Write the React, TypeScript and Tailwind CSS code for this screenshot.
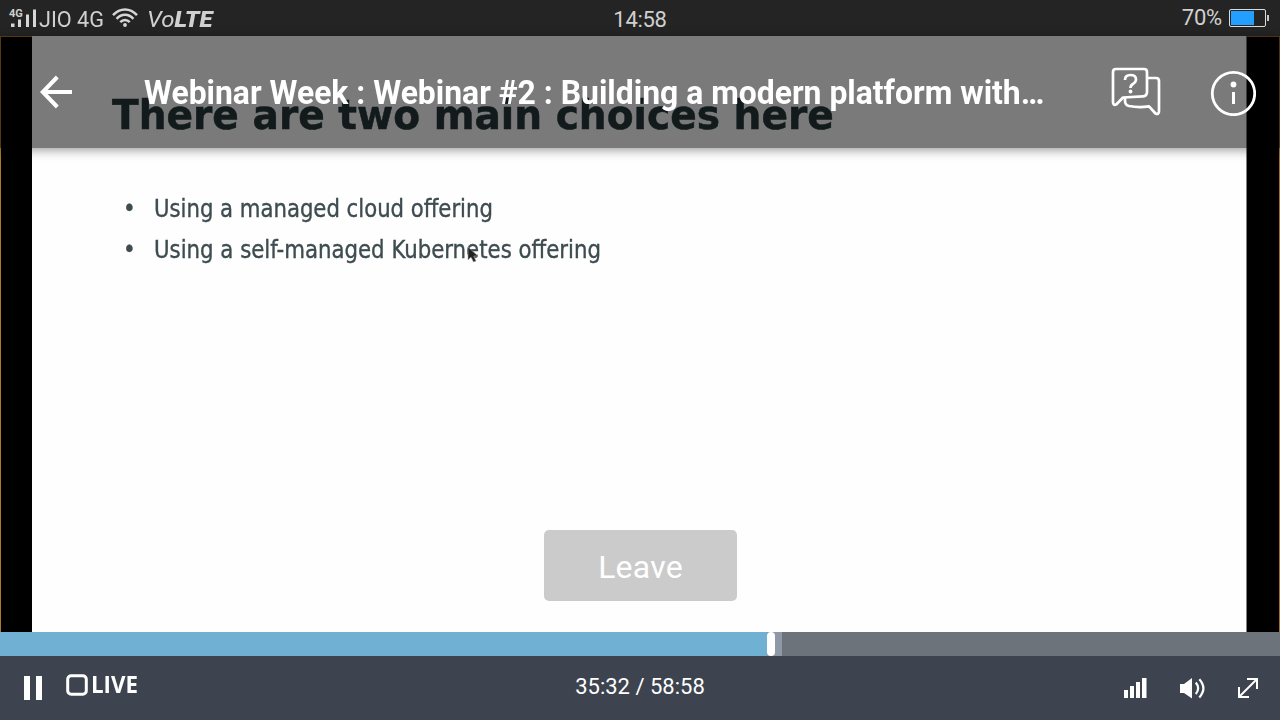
function SignalIcon() {
  return (
    <svg width="30" height="26" viewBox="0 0 30 26" fill="#d6d6d6">
      <rect x="3" y="14.500" width="3.500" height="3.500" />
      <rect x="10" y="10.500" width="3" height="7.500" />
      <rect x="18" y="5.500" width="3" height="12.500" />
      <rect x="25" y="0.500" width="3" height="17.500" />
    </svg>
  );
}

function WifiIcon() {
  return (
    <svg width="26" height="20" viewBox="0 0 26 20" fill="none" stroke="#d6d6d6" strokeWidth="2.500">
      <path d="M1 7.200C8 -0.500 18 -0.500 25 7.200" />
      <path d="M4.600 10.800C9.500 5.400 16.500 5.400 21.400 10.800" />
      <path d="M8.300 14.200C11 11.200 15 11.200 17.700 14.200" />
      <circle cx="13" cy="17" r="1.900" fill="#d6d6d6" stroke="none" />
    </svg>
  );
}

function BatteryIcon() {
  return (
    <svg width="40" height="18" viewBox="0 0 40 18">
      <rect x="0.500" y="0.500" width="36" height="17" rx="1.500" fill="none" stroke="#dcdcdc" />
      <rect x="2" y="2" width="23" height="14" fill="#229fff" />
      <rect x="38" y="6" width="2" height="6" fill="#c8c8c8" />
    </svg>
  );
}

function StatusBar() {
  return (
    <div className="grid h-9 shrink-0 grid-cols-3 bg-[#242424] text-[22px] leading-9 text-[#d0d0d0]">
      <div className="flex pl-2">
        <div className="relative w-[30px] pt-[9px]">
          <SignalIcon />
          <span className="absolute top-[8px] left-[1px] text-[11px] leading-[11px] font-bold">4G</span>
        </div>
        <span className="mt-[2px] w-[74px] origin-left scale-x-[0.985] whitespace-nowrap pl-[1px] text-[22px]">JIO 4G</span>
        <div className="pt-[8px]">
          <WifiIcon />
        </div>
        <span className="mt-[2px] ml-[9px] origin-left scale-x-[1.090] text-[22px] italic">
          Vo<b className="font-black">LTE</b>
        </span>
      </div>
      <div className="pt-[2px] text-center tracking-[-0.300px]">14:58</div>
      <div className="flex justify-end pr-[11px]">
        <span className="mr-[7px] tracking-[-0.200px]">70%</span>
        <div className="pt-[9px]">
          <BatteryIcon />
        </div>
      </div>
    </div>
  );
}

function Slide() {
  return (
    <div className="w-[1215px] border-r border-[#808080] bg-[#fefefe] pt-[53px] font-['DejaVu_Sans','Noto_Sans',sans-serif]">
      <h2 className="ml-[80px] origin-left scale-x-[0.954] text-[41px] leading-[52px] font-bold whitespace-nowrap text-[#26383b] blur-[0.500px] [-webkit-text-stroke:0.500px_#26383b]">
        There are two main choices here
      </h2>
      <ul className="mt-[48px] pl-[94px] font-['DejaVu_Sans_Condensed','DejaVu_Sans',sans-serif] text-[24px] leading-[41px] whitespace-nowrap text-[#3e4c50] blur-[0.300px] [-webkit-text-stroke:0.350px_#3e4c50]">
        <li className="flex">
          <span className="-ml-[3px] w-[31px]">•</span>
          <span className="origin-left scale-x-[0.982]">Using a managed cloud offering</span>
        </li>
        <li className="flex">
          <span className="-ml-[3px] w-[31px]">•</span>
          <span className="origin-left scale-x-[0.986]">Using a self-managed Kubernetes offering</span>
        </li>
      </ul>
    </div>
  );
}

function QuestionChatIcon() {
  return (
    <svg width="50" height="50" viewBox="0 0 50 50" fill="none" stroke="#fff" strokeWidth="2.700" strokeLinejoin="round">
      <path d="M5 2H33Q36 2 36 5V25Q36 29 32 29.300L12 30.500L5.500 37.300Q2 39 2 35V5Q2 2 5 2Z" />
      <path d="M36 11H45Q48 11 48 14V44Q48 48 44.500 46.500L38 39.300Q28 41 18 39Q14 38 14 34V30.500" />
      <path d="M14 13Q14 8 19.500 8Q25 8 25 12.500Q25 15 22 17Q19.500 18.500 19.500 21" />
      <circle cx="19.500" cy="24.500" r="1.900" fill="#fff" stroke="none" />
    </svg>
  );
}

function Header() {
  return (
    <header className="absolute inset-x-0 top-0 flex h-28 items-center bg-black/52 shadow-[0_2px_10px_rgba(0,0,0,0.4)]">
      <button className="ml-[40px] w-[104px]" aria-label="Back">
        <svg width="32" height="34" viewBox="0 0 32 34" fill="none" stroke="#fff" strokeWidth="4">
          <path d="M32 17H3M17.300 2L2.800 17L17.300 32" />
        </svg>
      </button>
      <h1 className="mt-[2px] w-[967px] origin-left scale-x-[0.966] text-[33px] leading-[40px] font-bold whitespace-nowrap text-white">
        Webinar Week : Webinar #2 : Building a modern platform with…
      </h1>
      <button aria-label="Questions">
        <QuestionChatIcon />
      </button>
      <button className="mt-[2px] ml-[49px]" aria-label="Information">
        <svg width="46" height="46" viewBox="0 0 46 46" fill="#fff">
          <circle cx="23.500" cy="23.500" r="21.200" fill="none" stroke="#fff" strokeWidth="2.800" />
          <circle cx="23.500" cy="14.500" r="2.900" />
          <rect x="22" y="22" width="3" height="12" />
        </svg>
      </button>
    </header>
  );
}

function Controls() {
  return (
    <footer className="grid h-16 shrink-0 grid-cols-3 bg-[#3d434f] text-white">
      <div className="flex pl-6">
        <svg className="mt-5" width="18" height="24" viewBox="0 0 18 24" fill="#fff">
          <rect width="6" height="24" />
          <rect x="12" width="6" height="24" />
        </svg>
        <svg className="mt-[18px] ml-[24px]" width="22" height="22" viewBox="0 0 22 22" fill="none">
          <rect x="1.700" y="1.700" width="18.600" height="18.600" rx="3.500" stroke="#fff" strokeWidth="3" />
        </svg>
        <span className="mt-[14px] ml-[3px] origin-left scale-x-[0.970] font-['Open_Sans','Noto_Sans',sans-serif] text-[23px] leading-[28px] font-bold">LIVE</span>
      </div>
      <div className="pt-[17px] text-center text-[22px] leading-[28px]">35:32 / 58:58</div>
      <div className="flex justify-end pr-[22px]">
        <svg className="mt-[22px]" width="23" height="20" viewBox="0 0 23 20" fill="#fff">
          <rect y="12" width="4" height="8" />
          <rect x="6" y="8" width="4" height="12" />
          <rect x="12" y="4" width="4" height="16" />
          <rect x="18" width="4.500" height="20" />
        </svg>
        <svg className="mt-[22px] ml-[33px]" width="25" height="21" viewBox="0 0 25 21" fill="none" stroke="#fff" strokeWidth="2.200">
          <path d="M0 6H4L12 0V20.500L4 15H0Z" fill="#fff" stroke="none" />
          <path d="M15.800 4.500Q20.500 10.300 15.800 16M19.300 1.200Q27.500 10.300 19.300 19.500" />
        </svg>
        <svg className="mt-[22px] ml-[33px]" width="20" height="20" viewBox="0 0 20 20" fill="none" stroke="#fff" strokeWidth="2">
          <path d="M9 1H19V11M19 1L1 19M1 9V19H11" />
        </svg>
      </div>
    </footer>
  );
}

export default function App() {
  return (
    <div className="flex h-[720px] w-[1280px] flex-col overflow-hidden bg-black font-['Roboto',sans-serif]">
      <StatusBar />
      <main className="relative flex h-[596px] shrink-0 bg-black">
        <div className="w-8 border-t border-l border-[#b07a24]" />
        <Slide />
        <div className="flex-1 border-t border-r border-[#a86c24]" />
        <Header />
        <svg className="absolute top-[210px] left-[467px]" width="12" height="18" viewBox="0 0 12 18">
          <path d="M1 1V14L4 11L6.500 16L9 15L6.700 10H11Z" fill="#222" stroke="#aaa" strokeWidth="0.600" />
        </svg>
        <button className="absolute top-[494px] left-[544px] h-[71px] w-[193px] rounded-[5px] bg-[#cbcbcb] pt-[3px] text-[32px] tracking-[0.200px] text-white">
          Leave
        </button>
      </main>
      <div className="relative flex h-6 shrink-0 bg-[#6d737b]">
        <div className="w-[767px] bg-[#70b0d2]" />
        <div className="w-[15px] bg-[#8f98a5]">
          <div className="h-6 w-2 rounded-[4px] bg-white" />
        </div>
      </div>
      <Controls />
    </div>
  );
}
